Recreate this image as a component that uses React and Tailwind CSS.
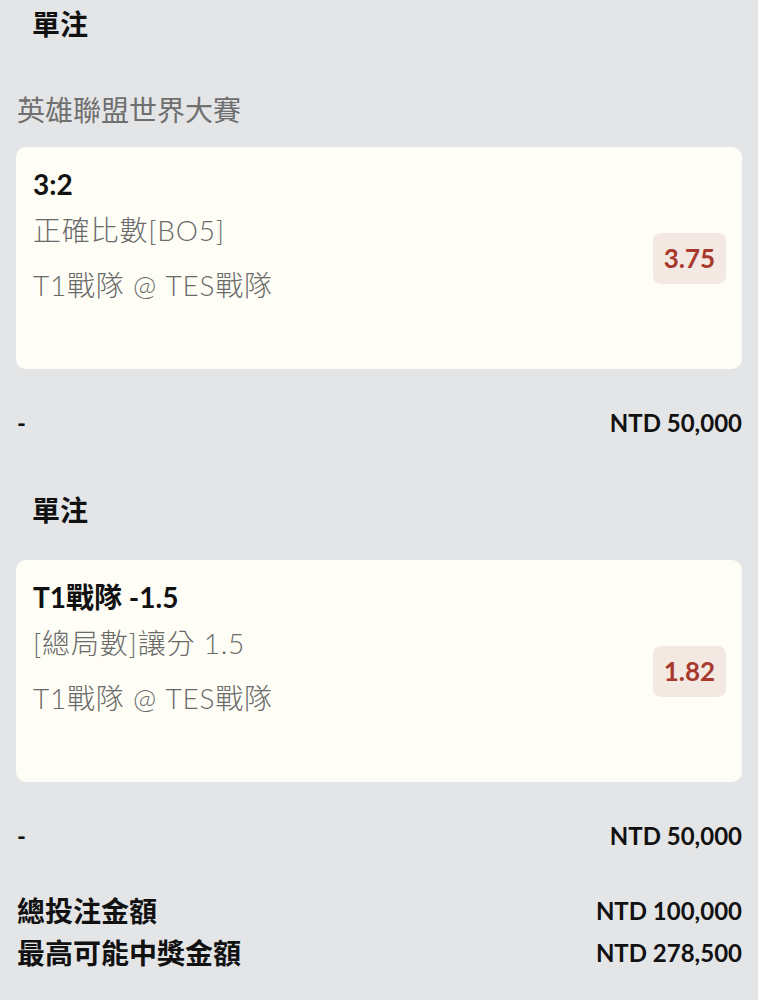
import React from "react";

const FONT = { fontFamily: 'Lato, "Noto Sans CJK TC", "Noto Sans", sans-serif' };

function Card({ title, market, teams, odds, className }) {
  return (
    <div className={"h-[222px] rounded-[10px] bg-[#fffef6] pl-[17px] pr-[16px] flex items-center justify-between " + className}>
      <div className="self-start pt-[17px]">
        <div className="text-[28px] leading-[40px] h-[40px] font-bold text-[#111111]">{title}</div>
        <div className="mt-[6px] text-[28px] leading-[40px] h-[40px] font-light tracking-[0.8px] text-[#6a6a6a]">{market}</div>
        <div className="mt-[15px] text-[28px] leading-[40px] h-[40px] font-light tracking-[0.8px] text-[#6a6a6a]">{teams}</div>
      </div>
      <div className="w-[73px] h-[51px] rounded-[8px] bg-[#f4e8e2] flex items-center justify-center text-[26px] font-bold text-[#a8392d]">
        {odds}
      </div>
    </div>
  );
}

function Summary({ amount, className }) {
  return (
    <div className={"h-[40px] flex items-center justify-between " + className}>
      <span className="text-[24px] font-bold text-[#111111] pl-[1px]">-</span>
      <span className="text-[24px] font-bold text-[#111111]">{amount}</span>
    </div>
  );
}

export default function App() {
  return (
    <div className="min-h-[1000px] w-full bg-[#e4e5e7] px-[16px]" style={FONT}>
      <div className="h-[48px] leading-[48px] pl-[16px] text-[28px] font-bold text-[#111111]">單注</div>
      <div className="mt-[38px] h-[48px] leading-[48px] pl-[1px] text-[28px] text-[#6f6f6f]">英雄聯盟世界大賽</div>
      <Card className="mt-[13px]" title="3:2" market="正確比數[BO5]" teams="T1戰隊 @ TES戰隊" odds="3.75" />
      <Summary amount="NTD 50,000" className="mt-[34px]" />
      <div className="mt-[43px] h-[48px] leading-[48px] pl-[16px] text-[28px] font-bold text-[#111111]">單注</div>
      <Card className="mt-[26px]" title="T1戰隊 -1.5" market="[總局數]讓分 1.5" teams="T1戰隊 @ TES戰隊" odds="1.82" />
      <Summary amount="NTD 50,000" className="mt-[34px]" />
      <div className="mt-[35px] h-[40px] flex items-center justify-between">
        <span className="text-[28px] font-bold text-[#111111] pl-[1px]">總投注金額</span>
        <span className="text-[24px] font-bold text-[#111111]">NTD 100,000</span>
      </div>
      <div className="mt-[2px] h-[40px] flex items-center justify-between">
        <span className="text-[28px] font-bold text-[#111111] pl-[1px]">最高可能中獎金額</span>
        <span className="text-[24px] font-bold text-[#111111]">NTD 278,500</span>
      </div>
    </div>
  );
}
